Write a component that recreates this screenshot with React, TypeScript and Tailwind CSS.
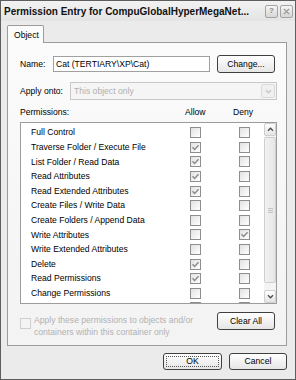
const rows: [string, boolean, boolean][] = [
  ['Full Control', false, false],
  ['Traverse Folder / Execute File', true, false],
  ['List Folder / Read Data', true, false],
  ['Read Attributes', true, false],
  ['Read Extended Attributes', true, false],
  ['Create Files / Write Data', false, false],
  ['Create Folders / Append Data', false, false],
  ['Write Attributes', false, true],
  ['Write Extended Attributes', false, false],
  ['Delete', true, false],
  ['Read Permissions', true, false],
  ['Change Permissions', false, false],
  ['Take Ownership', false, false],
]

function Check({ on }: { on: boolean }) {
  return (
    <span className="flex h-[11px] w-[11px] shrink-0 items-center justify-center border border-[#8e8e8e] bg-gradient-to-br from-[#e2e2e2] to-white">
      {on && (
        <svg viewBox="0 0 9 9" className="h-[9px] w-[9px]">
          <path d="M1.5 4.2 L3.6 6.4 L7.6 2.2" stroke="#8a8a8a" strokeWidth="1.4" fill="none" />
        </svg>
      )}
    </span>
  )
}

function Chevron({ up, color = '#4a4a4a' }: { up?: boolean; color?: string }) {
  return (
    <svg viewBox="0 0 8 6" className="h-[5px] w-[7px]">
      <path d={up ? 'M1 4.5 L4 1.5 L7 4.5' : 'M1 1.5 L4 4.5 L7 1.5'} stroke={color} strokeWidth="1.5" fill="none" />
    </svg>
  )
}

function Btn({ children, className = '' }: { children: React.ReactNode; className?: string }) {
  return (
    <div
      className={`flex items-center justify-center rounded-[3px] border border-[#404040] bg-gradient-to-b from-white to-[#e6e6e6] text-black ${className}`}
    >
      {children}
    </div>
  )
}

export default function App() {
  return (
    <div
      className="flex h-[380px] w-[296px] flex-col border border-[#5e5e5e] bg-[#ebebeb] text-[8.6px] text-black"
      style={{ fontFamily: '"Liberation Sans", Arial, sans-serif' }}
    >
      {/* title bar */}
      <div className="flex h-[20px] items-center bg-gradient-to-b from-[#f2f2f2] to-[#e4e4e4] pl-[3px] pr-[2px]">
        <span className="flex-1 truncate text-[10px] font-bold text-[#111]">
          Permission Entry for CompuGlobalHyperMegaNet...
        </span>
        <div className="flex gap-[2px]">
          <div className="flex h-[13px] w-[13px] items-center justify-center rounded-[2px] border border-[#a4a4a4] bg-gradient-to-b from-[#f6f6f6] to-[#d6d6d6] text-[8px] font-bold leading-none text-[#8a8a8a]">
            ?
          </div>
          <div className="flex h-[13px] w-[13px] items-center justify-center rounded-[2px] border border-[#a4a4a4] bg-gradient-to-b from-[#f6f6f6] to-[#d6d6d6]">
            <svg viewBox="0 0 8 8" className="h-[7px] w-[7px]">
              <path d="M1 1 L7 7 M7 1 L1 7" stroke="#9a9a9a" strokeWidth="1.6" />
            </svg>
          </div>
        </div>
      </div>

      {/* tabs */}
      <div className="ml-[6px] mt-[4px] flex">
        <div className="relative z-10 -mb-px flex h-[18px] w-[37px] items-start rounded-t-[2px] border border-b-0 border-[#9c9c9c] bg-[#fbfbfb] pl-[6px] pt-[3px]">
          Object
        </div>
      </div>

      {/* panel */}
      <div className="ml-[6px] mr-[8px] flex h-[304px] flex-col border border-[#9c9c9c] bg-gradient-to-b from-[#fbfbfb] to-[#f3f3f3] pl-[12px] pr-[9px]">
        <div className="mt-[12px] flex h-[18px] items-center">
          <span className="w-[33px]">Name:</span>
          <div className="flex h-[16px] w-[157px] items-center border border-[#a0a0a0] bg-white pl-[2px]">
            Cat (TERTIARY\XP\Cat)
          </div>
          <Btn className="ml-[7px] h-[18px] w-[58px]">Change...</Btn>
        </div>

        <div className="mt-[9px] flex h-[18px] items-center">
          <span className="w-[50px]">Apply onto:</span>
          <div className="flex h-[18px] flex-1 items-center border border-[#c8c8c8] bg-[#f5f5f5] pl-[3px] text-[#b0b0b0]">
            <span className="flex-1">This object only</span>
            <div className="mr-px flex h-[14px] w-[14px] items-center justify-center rounded-[2px] border border-[#dadada] bg-[#f0f0f0]">
              <Chevron color="#c4c4c4" />
            </div>
          </div>
        </div>

        <div className="mt-[5px] flex h-[14px] items-center">
          <span className="w-[165px]">Permissions:</span>
          <span className="w-[48px]">Allow</span>
          <span>Deny</span>
        </div>

        <div className="mt-[3px] flex h-[182px] overflow-hidden border border-[#9c9c9c] bg-white">
          <div className="flex-1 pt-[2.5px]">
            {rows.map(([label, allow, deny]) => (
              <div key={label} className="flex h-[14.6px] items-center pl-[10px]">
                <span className="w-[159px] whitespace-nowrap">{label}</span>
                <Check on={allow} />
                <span className="w-[38px]" />
                <Check on={deny} />
              </div>
            ))}
          </div>
          <div className="flex w-[12px] flex-col bg-[#f4f4f4]">
            <div className="flex h-[13px] items-center justify-center rounded-[2px] border border-[#cfcfcf] bg-gradient-to-b from-white to-[#e4e4e4]">
              <Chevron up />
            </div>
            <div className="mt-px flex h-[146px] items-center justify-center rounded-[2px] border border-[#cfcfcf] bg-gradient-to-r from-[#f2f2f2] to-[#e6e6e6]">
              <div className="flex flex-col gap-px">
                <span className="h-px w-[5px] bg-[#c4c4c4]" />
                <span className="h-px w-[5px] bg-[#c4c4c4]" />
                <span className="h-px w-[5px] bg-[#c4c4c4]" />
              </div>
            </div>
            <div className="flex-1" />
            <div className="flex h-[13px] items-center justify-center rounded-[2px] border border-[#cfcfcf] bg-gradient-to-b from-white to-[#e4e4e4]">
              <Chevron />
            </div>
          </div>
        </div>

        <div className="mt-[8px] flex items-start">
          <span className="mt-[6px] h-[11px] w-[11px] border border-[#cfcfcf] bg-[#f4f4f4]" />
          <span className="ml-[3px] mt-[3px] leading-[11.5px] text-[#b2b2b2]">
            Apply these permissions to objects and/or
            <br />
            containers within this container only
          </span>
          <Btn className="ml-auto mr-[2px] h-[18px] w-[58px]">Clear All</Btn>
        </div>
      </div>

      {/* dialog buttons */}
      <div className="mr-[8px] mt-[7px] flex justify-end gap-[7px]">
        <Btn className="h-[17px] w-[59px] p-[2px]">
          <span className="flex h-full w-full items-center justify-center border border-dotted border-[#555]">OK</span>
        </Btn>
        <Btn className="h-[17px] w-[58px]">Cancel</Btn>
      </div>
    </div>
  )
}
